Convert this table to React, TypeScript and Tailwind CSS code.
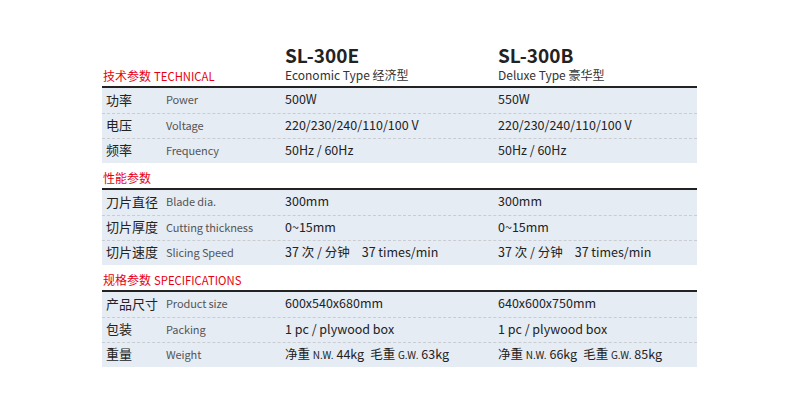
const font = { fontFamily: '"Noto Sans CJK SC", "Noto Sans", sans-serif' };

type Row = { cn: string; en: string; a: React.ReactNode; b: React.ReactNode };

const weight = (nw: string, gw: string) => (
  <span>
    净重 <span className="text-[10px]">N.W.</span> {nw}
    <span className="ml-[6px]">毛重</span> <span className="text-[10px]">G.W.</span> {gw}
  </span>
);

const speed = (
  <span>
    37 次 / 分钟<span className="ml-[12px]">37 times/min</span>
  </span>
);

const sections: { cn: string; en: string; rows: Row[] }[] = [
  {
    cn: '技术参数',
    en: 'TECHNICAL',
    rows: [
      { cn: '功率', en: 'Power', a: '500W', b: '550W' },
      { cn: '电压', en: 'Voltage', a: '220/230/240/110/100 V', b: '220/230/240/110/100 V' },
      { cn: '频率', en: 'Frequency', a: '50Hz / 60Hz', b: '50Hz / 60Hz' },
    ],
  },
  {
    cn: '性能参数',
    en: '',
    rows: [
      { cn: '刀片直径', en: 'Blade dia.', a: '300mm', b: '300mm' },
      { cn: '切片厚度', en: 'Cutting thickness', a: '0~15mm', b: '0~15mm' },
      { cn: '切片速度', en: 'Slicing Speed', a: speed, b: speed },
    ],
  },
  {
    cn: '规格参数',
    en: 'SPECIFICATIONS',
    rows: [
      { cn: '产品尺寸', en: 'Product size', a: '600x540x680mm', b: '640x600x750mm' },
      { cn: '包装', en: 'Packing', a: '1 pc / plywood box', b: '1 pc / plywood box' },
      { cn: '重量', en: 'Weight', a: weight('44kg', '63kg'), b: weight('66kg', '85kg') },
    ],
  },
];

function Title({ cn, en }: { cn: string; en: string }) {
  return (
    <div className="pl-[1px] pb-[1px] text-[12px] leading-[18px] text-[#e60012] whitespace-nowrap">
      {cn}
      {en && <span className="ml-[3px] text-[11.3px]">{en}</span>}
    </div>
  );
}

function Rows({ rows }: { rows: Row[] }) {
  return (
    <div className="bg-[#e6ecf4]">
      {rows.map((r, i) => (
        <div
          key={r.cn}
          className={`grid grid-cols-[60px_119px_213px_1fr] items-center h-[25px] pb-[2px] ${
            i > 0 ? 'border-t border-dashed border-[#c9cdd2]' : ''
          }`}
        >
          <div className="pl-[4px] text-[13px] text-[#222]">{r.cn}</div>
          <div className="pl-[4px] text-[11px] tracking-[-0.1px] text-[#555]">{r.en}</div>
          <div className="pl-[4px] text-[12.5px] text-[#222]">{r.a}</div>
          <div className="pl-[4px] text-[12.5px] text-[#222]">{r.b}</div>
        </div>
      ))}
    </div>
  );
}

export default function App() {
  return (
    <div className="w-[800px] h-[410px] bg-white" style={font}>
      <div className="ml-[102px] w-[595px]">
        <div className="h-[88px] grid grid-cols-[179px_213px_1fr] items-end border-b-2 border-[#222]">
          <Title cn={sections[0].cn} en={sections[0].en} />
          <div className="pl-[4px] pb-[3px]">
            <div className="text-[19px] font-bold leading-[24px] text-[#222]">SL-300E</div>
            <div className="text-[12px] leading-[16px] text-[#333]">Economic Type 经济型</div>
          </div>
          <div className="pl-[4px] pb-[3px]">
            <div className="text-[19px] font-bold leading-[24px] text-[#222]">SL-300B</div>
            <div className="text-[12px] leading-[16px] text-[#333]">Deluxe Type 豪华型</div>
          </div>
        </div>
        <Rows rows={sections[0].rows} />
        {sections.slice(1).map((s) => (
          <div key={s.cn}>
            <div className="h-[27px] flex items-end border-b-2 border-[#222]">
              <Title cn={s.cn} en={s.en} />
            </div>
            <Rows rows={s.rows} />
          </div>
        ))}
      </div>
    </div>
  );
}
